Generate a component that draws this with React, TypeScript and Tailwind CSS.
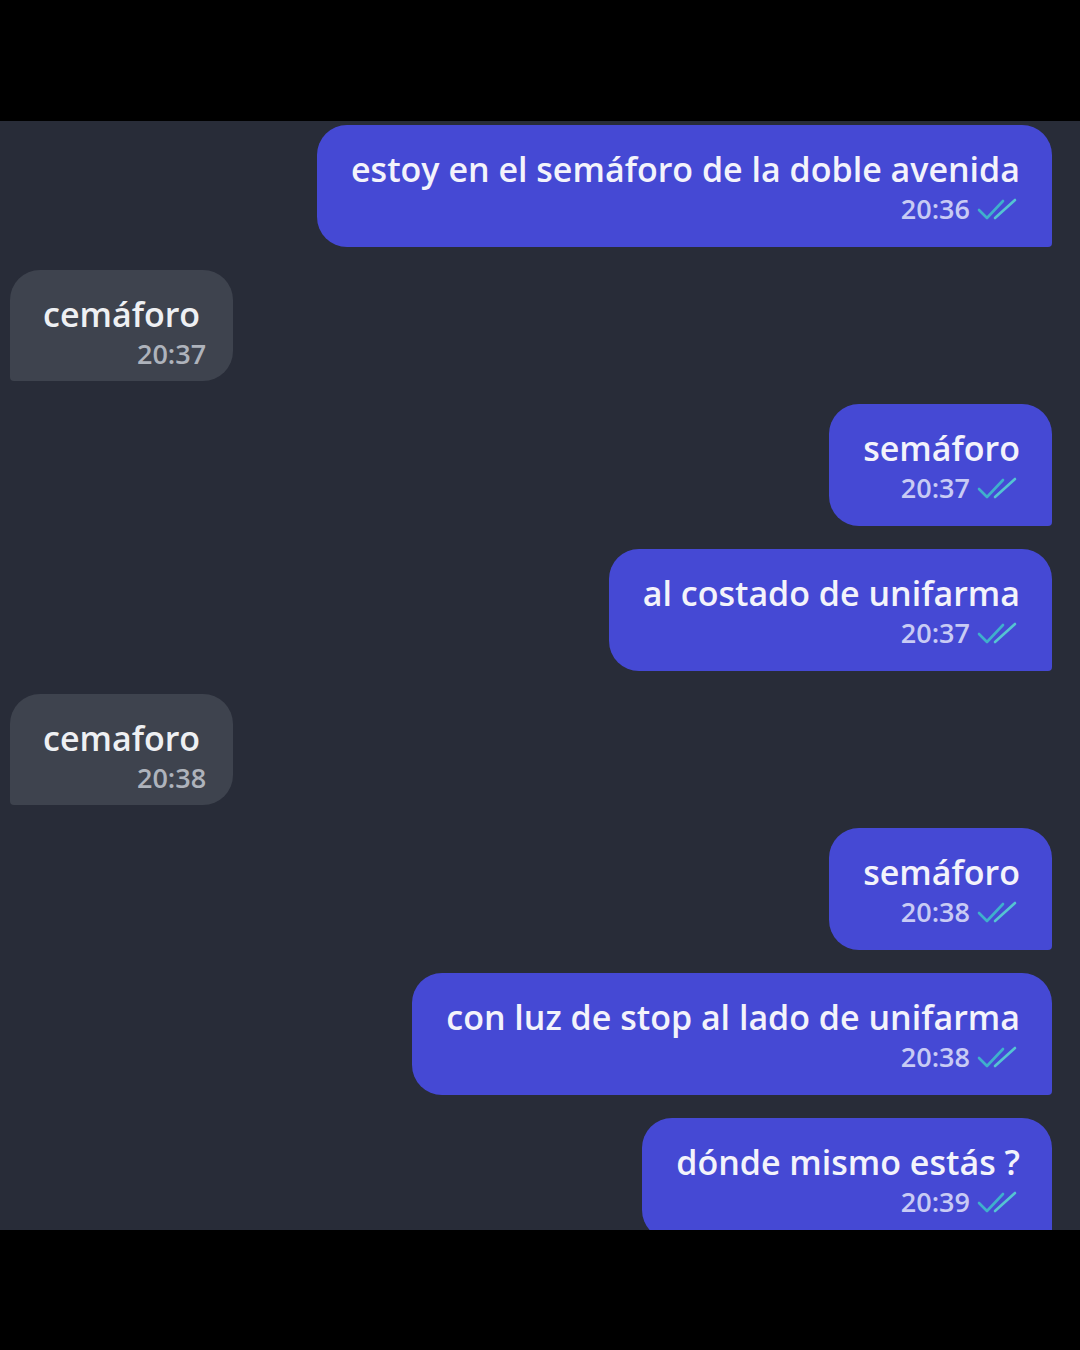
import React from "react";

type Msg = { out: boolean; text: string; time: string };

const msgs: Msg[] = [
  { out: true, text: "estoy en el semáforo de la doble avenida", time: "20:36" },
  { out: false, text: "cemáforo", time: "20:37" },
  { out: true, text: "semáforo", time: "20:37" },
  { out: true, text: "al costado de unifarma", time: "20:37" },
  { out: false, text: "cemaforo", time: "20:38" },
  { out: true, text: "semáforo", time: "20:38" },
  { out: true, text: "con luz de stop al lado de unifarma", time: "20:38" },
  { out: true, text: "dónde mismo estás ?", time: "20:39" },
];

function Ticks() {
  return (
    <svg width="44" height="24" viewBox="0 0 44 24" fill="none">
      <path d="M3 13 L11 21 L27 4" stroke="#3fb0cc" strokeWidth="2.6" strokeLinecap="round" strokeLinejoin="round" />
      <path d="M19 21 L39 3" stroke="#55c4d2" strokeWidth="2.6" strokeLinecap="round" />
    </svg>
  );
}

export default function App() {
  return (
    <div className="w-[1080px] h-[1350px] bg-black flex flex-col" style={{ fontFamily: "'Open Sans', 'Noto Sans', sans-serif" }}>
      <div className="h-[121px] shrink-0 bg-black" />
      <div className="h-[1109px] shrink-0 bg-[#282c38] overflow-hidden flex flex-col gap-[23px] pt-[4px]">
        {msgs.map((m, i) =>
          m.out ? (
            <div key={i} className="flex justify-end pr-[28px]">
              <div className="h-[122px] shrink-0 bg-[#4549d4] rounded-[30px] rounded-br-[4px] pl-[34px] pr-[32px] pt-[24px] flex flex-col items-end">
                <div className="text-[34px] leading-[40px] font-semibold text-[#f3f3fb] whitespace-nowrap">{m.text}</div>
                <div className="flex items-center gap-[6px] mt-[5px]">
                  <span className="text-[27px] leading-[30px] font-semibold text-[#c8cbf4]">{m.time}</span>
                  <Ticks />
                </div>
              </div>
            </div>
          ) : (
            <div key={i} className="flex justify-start pl-[10px]">
              <div className="h-[111px] shrink-0 bg-[#3e434e] rounded-[30px] rounded-bl-[4px] pl-[33px] pr-[27px] pt-[24px] flex flex-col items-end">
                <div className="text-[34px] leading-[40px] font-semibold text-[#eef0f3] whitespace-nowrap mr-[6px]">{m.text}</div>
                <span className="text-[27px] leading-[30px] mt-[5px] font-semibold text-[#aeb3bc]">{m.time}</span>
              </div>
            </div>
          )
        )}
      </div>
      <div className="flex-1 bg-black" />
    </div>
  );
}
